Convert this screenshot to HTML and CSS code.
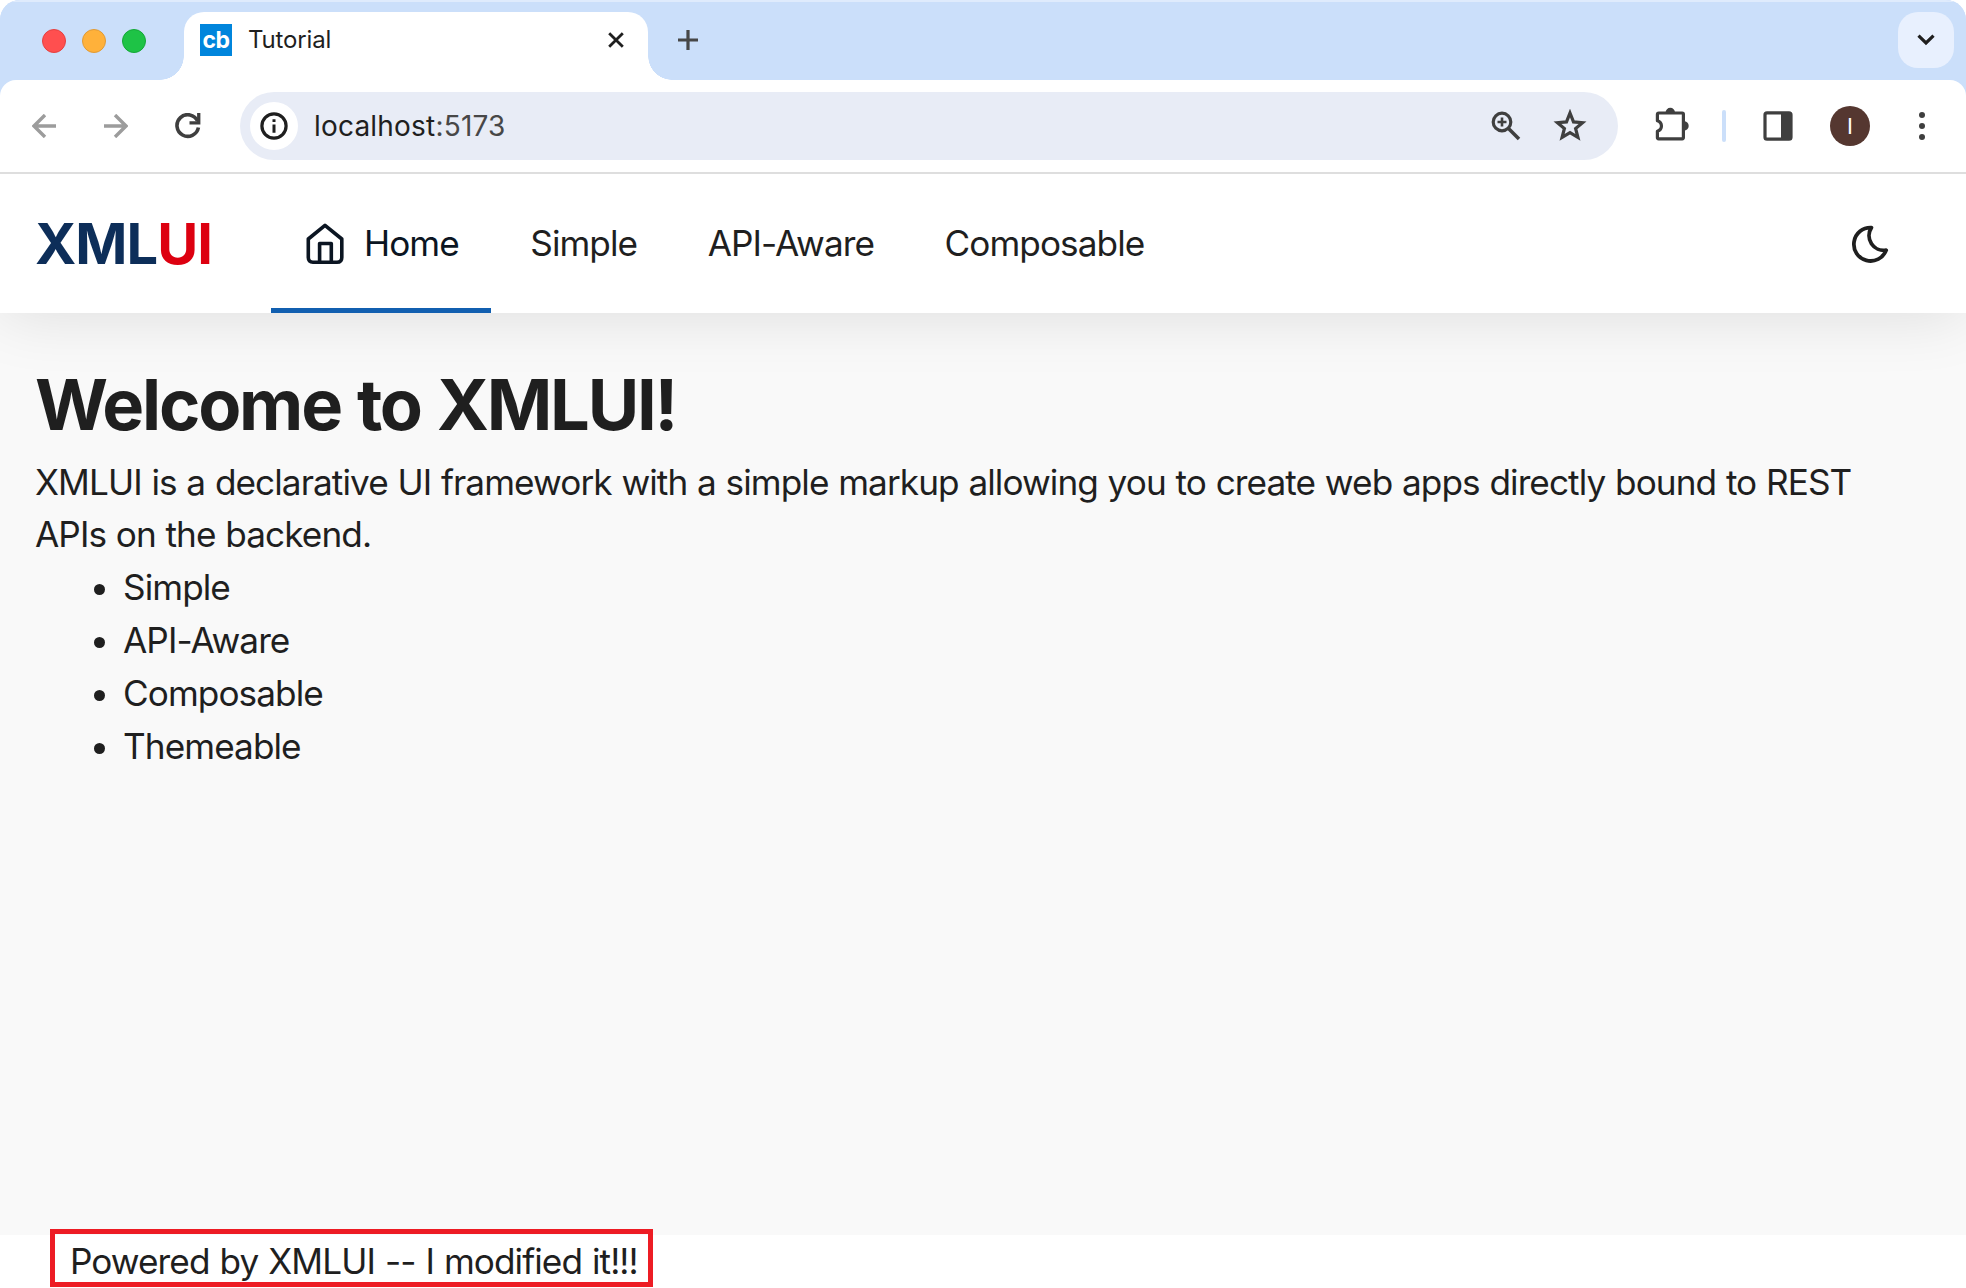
FILE: index.html
```html
<!DOCTYPE html>
<html lang="en">
<head>
<meta charset="utf-8">
<title>Tutorial</title>
<link rel="stylesheet" href="styles.css">
</head>
<body>
<div class="window">
  <div class="tabstrip">
    <div class="lights"><span class="light red"></span><span class="light amber"></span><span class="light green"></span></div>
    <div class="tab">
      <span class="favicon">cb</span>
      <span class="tab-title">Tutorial</span>
      <svg class="close" width="16" height="16" viewBox="0 0 16 16"><path d="M1.2 1.2l13.6 13.6M14.8 1.2l-13.6 13.6" stroke="#1f1f1f" stroke-width="2.8" fill="none"/></svg>
    </div>
    <svg class="plus" width="20" height="20" viewBox="0 0 20 20"><path d="M10 0v20M0 10h20" stroke="#474747" stroke-width="3.2"/></svg>
    <div class="tab-search"><svg width="18" height="12" viewBox="0 0 18 12"><path d="M1.5 1.7L9 9L16.5 1.7" fill="none" stroke="#1f1f1f" stroke-width="3.2"/></svg></div>
  </div>
  <div class="toolbar">
    <svg class="back" width="24" height="24" viewBox="0 0 24 24"><path d="M24 12H2M13 1L2 12L13 23" fill="none" stroke="#9c9c9c" stroke-width="3.4"/></svg>
    <svg class="forward" width="24" height="24" viewBox="0 0 24 24"><path d="M0 12H22M11 1L22 12L11 23" fill="none" stroke="#9c9c9c" stroke-width="3.4"/></svg>
    <svg class="reload" width="26" height="26" viewBox="0 0 26 26"><path d="M22.6 8A10.8 10.8 0 1 0 23.4 14.5" fill="none" stroke="#3f3f3f" stroke-width="3.6"/><path d="M22.1 0H25.4V11.5H14.5V8.3H22.1Z" fill="#3f3f3f"/></svg>
    <div class="omnibox">
      <span class="site-info"><svg width="28" height="28" viewBox="0 0 28 28"><circle cx="14" cy="14" r="12.1" fill="none" stroke="#1f1f1f" stroke-width="3.2"/><path d="M14 12.4V20.8M14 7.2V10" stroke="#1f1f1f" stroke-width="3"/></svg></span>
      <span class="url">localhost<span class="port">:5173</span></span>
      <svg class="zoom" width="30" height="30" viewBox="0 0 30 30" fill="none" stroke="#3f3f3f"><circle cx="11" cy="11" r="8.8" stroke-width="3.2"/><path d="M17.5 17.5L28 28" stroke-width="3.6"/><path d="M11 6.5v9M6.5 11h9" stroke-width="2.6"/></svg>
      <svg class="star" width="34" height="32" viewBox="0 0 34 32"><path d="M17 4L20.5 12.9L29.5 13.7L22.6 19.5L24.9 28.4L17 23.6L9.1 28.4L11.4 19.5L4.5 13.7L13.5 12.9Z" fill="none" stroke="#3f3f3f" stroke-width="3.2"/></svg>
    </div>
    <svg class="puzzle" width="34" height="34" viewBox="0 0 34 34"><path d="M3.8 6H27.2Q28.4 6 28.4 7.2V30.6Q28.4 31.8 27.2 31.8H3.6Q2.4 31.8 2.4 30.6V24.2C7.8 22.5 7.8 15.5 2.4 13.8V7.4Q2.4 6 3.8 6Z" fill="none" stroke="#3f3f3f" stroke-width="3.2" stroke-linejoin="round"/><path d="M10.6 5.5a4.7 4.7 0 0 1 9.4 0ZM29 14.2a4.7 4.7 0 0 1 0 9.4Z" fill="#3f3f3f"/></svg>
    <span class="divider"></span>
    <svg class="panel" width="30" height="30" viewBox="0 0 30 30"><rect x="2" y="1.8" width="26" height="26.4" rx="2" fill="none" stroke="#3f3f3f" stroke-width="3.2"/><path d="M18 1H28V29H18Z" fill="#3f3f3f"/></svg>
    <span class="avatar">I</span>
    <svg class="dots" width="6" height="28" viewBox="0 0 6 28" fill="#3f3f3f"><circle cx="3" cy="3" r="3"/><circle cx="3" cy="14" r="3"/><circle cx="3" cy="25" r="3"/></svg>
  </div>
  <header class="app-header">
    <div class="logo">XML<span class="logo-ui">UI</span></div>
    <nav class="nav">
      <a class="nav-item active"><svg class="home" width="38" height="42" viewBox="0 0 38 42" fill="none" stroke="#0b1522" stroke-width="3.6" stroke-linejoin="round"><path d="M2.3 16L19 2.3L35.8 16V34.5Q35.8 39.3 31 39.3H7Q2.3 39.3 2.3 34.5Z"/><path d="M13.6 39V20.5H25.3V39"/></svg><span>Home</span></a>
      <a class="nav-item">Simple</a>
      <a class="nav-item">API-Aware</a>
      <a class="nav-item">Composable</a>
    </nav>
    <svg class="moon" width="38" height="38" viewBox="0 0 38 38"><path d="M20.4 2.6A16.7 16.7 0 1 0 35.2 25.2A14.8 14.8 0 0 1 20.4 2.6Z" fill="none" stroke="#1f1f1f" stroke-width="3.8" stroke-linejoin="round"/></svg>
  </header>
  <main class="content">
    <h1>Welcome to XMLUI!</h1>
    <p>XMLUI is a declarative UI framework with a simple markup allowing you to create web apps directly bound to REST APIs on the backend.</p>
    <ul><li>Simple</li><li>API-Aware</li><li>Composable</li><li>Themeable</li></ul>
  </main>
  <footer class="footer"><span>Powered by XMLUI -- I modified it!!!</span><div class="highlight"></div></footer>
</div>
</body>
</html>
```
FILE: styles.css
```css
* { box-sizing: border-box; }
body { margin: 0; background: #fff; font-family: Inter, "Liberation Sans", sans-serif; color: #1f1f1f; }
svg { display: block; flex: none; }
.window { width: 1966px; height: 1288px; display: flex; flex-direction: column; overflow: hidden; border-radius: 20px 20px 0 0; background: linear-gradient(#cbdffa 0 110px, #fff 110px); }
.tabstrip { height: 80px; flex: none; display: flex; background: #cbdffa; border-top: 2px solid #dfebfc; padding: 10px 12px 0 42px; }
.lights { display: flex; gap: 16px; padding-top: 17px; width: 142px; }
.light { width: 24px; height: 24px; border-radius: 50%; border: 1px solid; }
.red { background: #ff4f4f; border-color: #e5403f; }
.amber { background: #ffb13a; border-color: #e09a35; }
.green { background: #1ec346; border-color: #14a836; }
.tab { position: relative; width: 464px; height: 68px; background: #fff; border-radius: 20px 20px 0 0; display: flex; align-items: flex-start; padding: 12px 24px 0 16px; }
.tab::before, .tab::after { content: ""; position: absolute; bottom: 0; width: 24px; height: 24px; }
.tab::before { left: -24px; background: radial-gradient(circle at 0 0, #cbdffa 23.5px, #fff 24px); }
.tab::after { right: -24px; background: radial-gradient(circle at 100% 0, #cbdffa 23.5px, #fff 24px); }
.favicon { width: 32px; height: 32px; background: #0085dc; color: #fff; font: bold 23px/32px Inter, sans-serif; letter-spacing: -.6px; text-align: center; }
.tab-title { margin-left: 16px; font-size: 24px; line-height: 32px; letter-spacing: -.15px; }
.close { margin: 8px 0 0 auto; }
.plus { margin: 18px 0 0 30px; }
.tab-search { margin-left: auto; width: 56px; height: 56px; border-radius: 20px; background: #e8f0fe; display: flex; align-items: center; justify-content: center; }
.toolbar { position: relative; z-index: 2; height: 94px; flex: none; background: #fff; border-radius: 16px 16px 0 0; border-bottom: 2px solid #dedede; display: flex; align-items: center; padding-left: 32px; }
.forward { margin-left: 48px; }
.reload { margin-left: 47px; }
.omnibox { margin-left: 39px; width: 1378px; height: 68px; border-radius: 34px; background: #e8ecf6; display: flex; align-items: center; padding-left: 10px; }
.site-info { width: 48px; height: 48px; border-radius: 50%; background: #fff; display: flex; align-items: center; justify-content: center; }
.url { margin-left: 16px; font-size: 28px; letter-spacing: .2px; }
.port { color: #474747; }
.zoom { margin-left: auto; }
.star { margin: 0 31px 2px 32px; }
.puzzle { margin: 0 0 4px 37px; }
.divider { width: 4px; height: 32px; border-radius: 2px; background: #cbdffa; margin-left: 33px; }
.panel { margin-left: 37px; }
.avatar { margin-left: 37px; width: 40px; height: 40px; border-radius: 50%; background: #553730; color: #fff; font-size: 22px; line-height: 40px; text-align: center; }
.dots { margin-left: 49px; }
.app-header { position: relative; z-index: 1; height: 139px; flex: none; background: #fff; display: flex; align-items: center; padding: 0 77px 0 35px; box-shadow: 0 0 66px rgba(0,0,0,.12); }
.logo { width: 236px; font-size: 56px; font-weight: 700; color: #0d2e59; letter-spacing: -1px; }
.logo-ui { color: #dd0010; }
.nav { display: flex; height: 139px; font-size: 35.2px; letter-spacing: -.95px; }
.nav-item { display: flex; align-items: center; padding: 0 35.3px 1px; border-bottom: 5px solid transparent; border-top: 5px solid transparent; }
.active { width: 220px; margin-right: 4px; padding-left: 35px; border-bottom-color: #115fb0; color: #0b1522; }
.home { margin: 1px 20px 0 0; }
.moon { margin: 0 0 0 auto; }
.content { height: 922px; flex: none; background: #f9f9f9; padding: 50px 35px 0; font-size: 35.2px; line-height: 52.8px; letter-spacing: -.93px; word-spacing: .75px; }
h1 { margin: 0 0 8px; font-size: 70.4px; line-height: 84.5px; font-weight: 700; letter-spacing: -2.2px; word-spacing: 1.6px; }
p { margin: 0; }
ul { margin: 0; padding-left: 88px; line-height: 53px; }
.footer { position: relative; height: 53px; padding-left: 70px; font-size: 35.2px; line-height: 52.8px; letter-spacing: -.95px; word-spacing: 1.1px; }
.highlight { position: absolute; left: 50px; top: -6px; width: 603px; height: 58px; border: 5px solid #ed1c24; }
```
